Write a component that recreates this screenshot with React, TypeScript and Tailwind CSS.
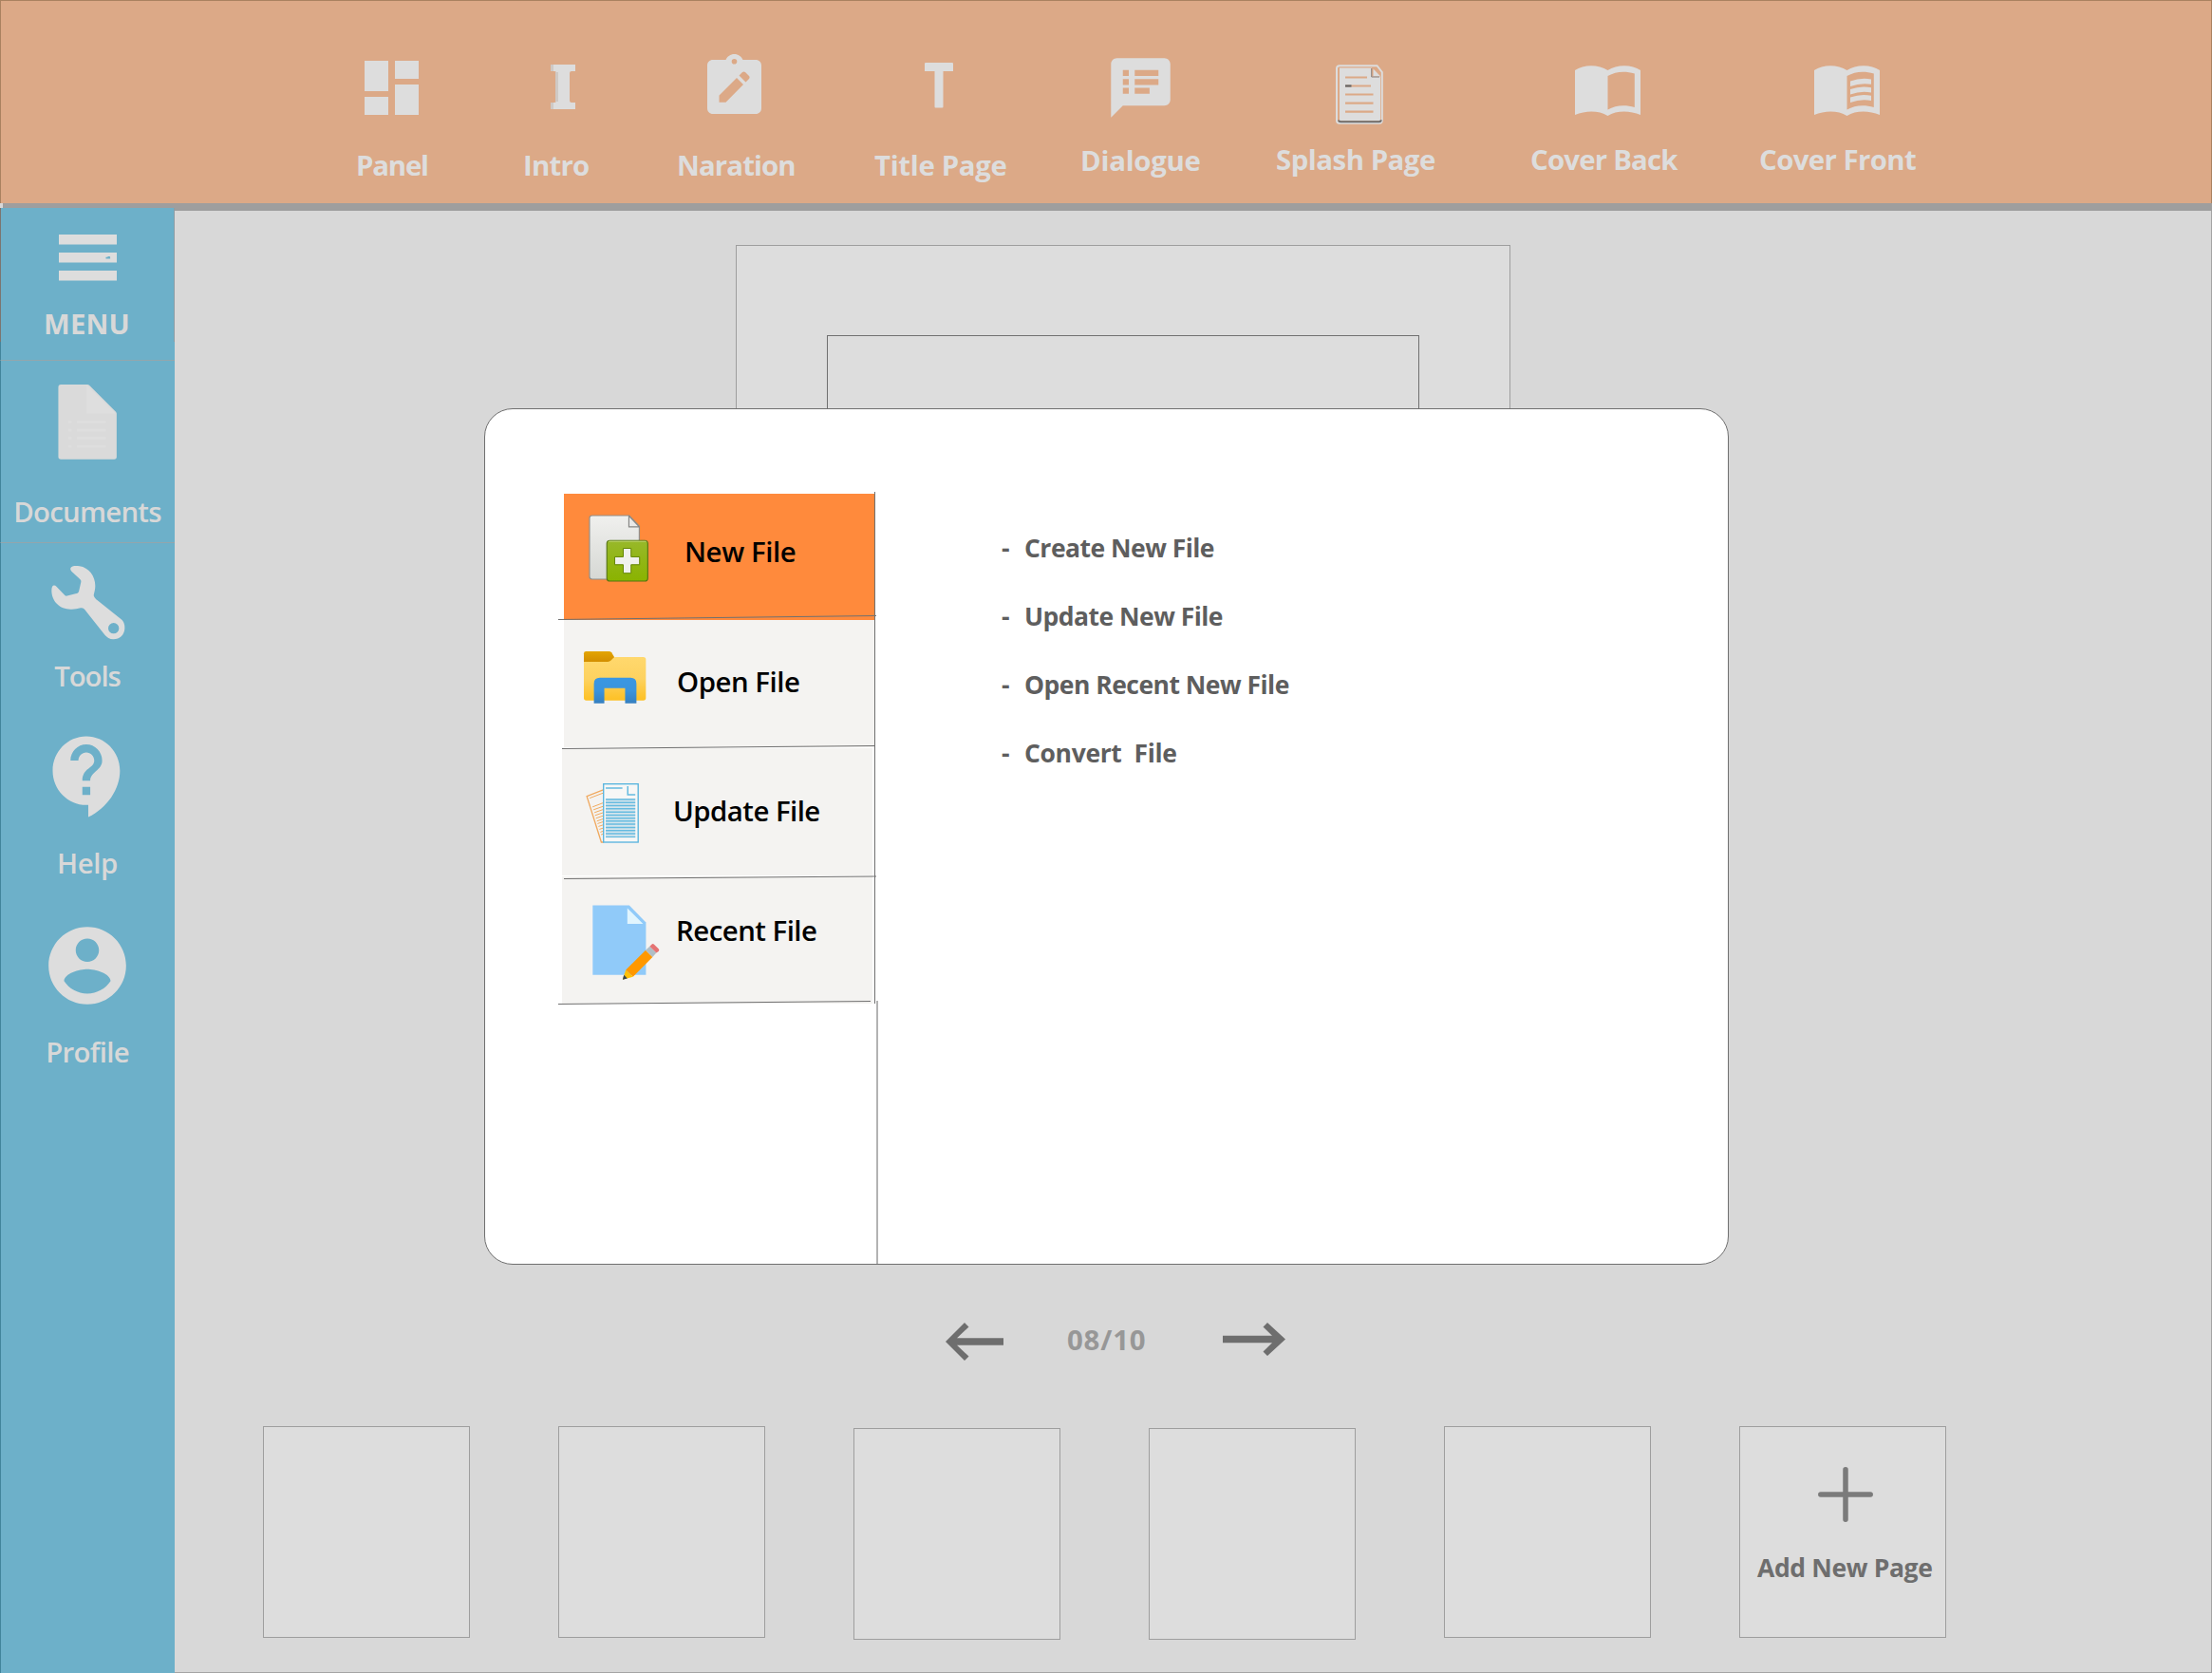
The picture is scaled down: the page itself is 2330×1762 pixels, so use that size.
import React from "react";
import { MdSpeakerNotes } from "react-icons/md";

function PanelIcon() {
  return (
    <svg className="h-[57px] w-[57px]" viewBox="0 0 57 57" fill="currentColor" shapeRendering="crispEdges">
      <path d="M0 0h25v32H0zM0 38h25v19H0zM32 0h25v19H32zM32 25h25v32H32z" />
    </svg>
  );
}

function IntroIcon() {
  return (
    <svg className="h-[47px] w-[26px]" viewBox="0 0 26 47" fill="currentColor">
      <path d="M0 0h26v7h-4q-2 0-2 2v29q0 2 2 2h4v7H0v-7h4q2 0 2-2V9q0-2-2-2H0z" />
      <path d="M0 0h3v7H0zM5 8h3v31H5zM0 40h3v7H0z" fill="#cfc9c5" />
    </svg>
  );
}

function NarrationIcon() {
  return (
    <svg className="h-[63px] w-[57px]" viewBox="0 0 57 63" fill="currentColor">
      <path
        fillRule="evenodd"
        d="M6 6h13.5C21 2.500 24.500 0 28.500 0S36 2.500 37.500 6H51c3.500 0 6 2.500 6 6v45c0 3.500-2.500 6-6 6H6c-3.500 0-6-2.500-6-6V12c0-3.500 2.500-6 6-6zM28.500 5a2.800 2.800 0 1 0 0 5.600a2.800 2.800 0 1 0 0-5.600zM12.500 43.500L31 25l7 7L19.500 50.700h-7zM33.500 22.500l3.500-3.500q1.500-1.200 3 0l4 4q1.200 1.500 0 3l-3.500 3.500z"
      />
    </svg>
  );
}

function TitleIcon() {
  return (
    <svg className="h-[48px] w-[30px]" viewBox="0 0 30 48" fill="currentColor">
      <path d="M1 0h28q1 0 1 1v8H19.500v37.500q0 1-1 1h-7q-1 0-1-1V9H0V1q0-1 1-1z" />
    </svg>
  );
}

function SplashIcon() {
  return (
    <svg className="h-[63px] w-[50px]" viewBox="0 0 50 63" fill="none">
      <path d="M4 1.200h39.500L48.800 8v50.500q0 3.300-3 3.300H4q-3 0-3-3V4q0-2.800 3-2.800z" fill="#dca987" stroke="#dddddd" strokeWidth="2" />
      <path d="M4 3.500h34v9h9V59H4z" fill="#dddddd" />
      <path d="M39.500 4.500l7.500 7.800h-7.500z" fill="#dddddd" />
      <path d="M37.700 4v9H46" stroke="#8a7f79" strokeWidth="1" />
      <path d="M3.200 58.500q0 1.800 2 1.800h40.500q2 0 2-2" stroke="#707070" strokeWidth="2" />
      <path d="M10 13.500h23M10 22.500h27M10 31.500h29.500M10 40.700h29.500M10 49.700h29.500" stroke="#dca987" strokeWidth="2.200" />
      <path d="M10 22.500h6.500" stroke="#666666" strokeWidth="2.200" />
    </svg>
  );
}

function BookIcon({ lines = false }: { lines?: boolean }) {
  return (
    <svg className="h-[53px] w-[69px]" viewBox="0 0 69 53" fill="currentColor">
      <path
        fillRule="evenodd"
        d="M0 5C9-1.500 25-1.500 34.500 5C44-1.500 60-1.500 69 5V52C58 47.500 44 47 34.500 53C25 47 11 47.500 0 52zM34.500 11V46.500C43 41.500 53 41 62.800 44V8.500C53 5.500 43 6 34.500 11z"
      />
      {lines && (
        <path
          d="M38 16.500Q49 12.500 60 14.500V19.800Q49 18 38 22zM38 25Q49 21 60 23.200V28.500Q49 26.500 38 30.500zM38 33.500Q49 29.500 60 31.700V37Q49 35 38 39z"
        />
      )}
    </svg>
  );
}

const tools = [
  { label: "Panel", box: "ml-[376px] w-[73px]", area: "h-[153px] pt-[63px] pl-[7px]", text: "-ml-[2px] tracking-[-1.2px]", icon: <PanelIcon /> },
  { label: "Intro", box: "ml-[103px] w-[67px]", area: "h-[153px] pt-[67px] pl-[27px]", text: "-ml-[2px] tracking-[-0.8px]", icon: <IntroIcon /> },
  { label: "Naration", box: "ml-[94px] w-[122px]", area: "h-[153px] pt-[56px] pl-[31px]", text: "-ml-[1px] tracking-[-0.9px]", icon: <NarrationIcon /> },
  { label: "Title Page", box: "ml-[85px] w-[139px]", area: "h-[153px] pt-[65px] pl-[53px]", text: "tracking-[-0.33px]", icon: <TitleIcon /> },
  { label: "Dialogue", box: "ml-[80px] w-[124px]", area: "h-[148px] pt-[54px] pl-[24px]", text: "-ml-[2px] tracking-[-0.28px]", icon: <MdSpeakerNotes className="h-[75px] w-[75px]" /> },
  { label: "Splash Page", box: "ml-[80px] w-[167px]", area: "h-[147px] pt-[67px] pl-[63px]", text: "tracking-[-0.49px]", icon: <SplashIcon /> },
  { label: "Cover Back", box: "ml-[101px] w-[155px]", area: "h-[147px] pt-[68px] pl-[47px]", text: "tracking-[-0.81px]", icon: <BookIcon /> },
  { label: "Cover Front", box: "ml-[87px] w-[164px]", area: "h-[147px] pt-[68px] pl-[57px]", text: "-ml-[1px] tracking-[-0.6px]", icon: <BookIcon lines /> },
];

function Toolbar() {
  return (
    <header className="flex h-[214px] shrink-0 border border-b-0 border-[#a9815f] bg-[#dca987] text-[#dddddd]">
      {tools.map((t) => (
        <div key={t.label} className={`shrink-0 ${t.box}`}>
          <div className={t.area}>{t.icon}</div>
          <div className={`text-[29.4px] leading-[40px] font-bold whitespace-nowrap ${t.text}`}>{t.label}</div>
        </div>
      ))}
    </header>
  );
}

function SideLabel({ children, className }: { children: string; className: string }) {
  return <div className={`pr-[1px] text-center text-[29.4px] leading-[40px] whitespace-nowrap text-[#d8d8d8] ${className}`}>{children}</div>;
}

function Sidebar() {
  return (
    <nav className="-mt-[3px] flex w-[184px] shrink-0 flex-col bg-[#6db0c9] text-[#dddddd]">
      <div className="h-[141px] border-r border-l border-r-[#8d9ea6] border-l-[#7b7570] pt-[28px]">
        <svg className="ml-[61px] h-[49px] w-[61px]" viewBox="0 0 61 49" fill="currentColor">
          <path d="M0 0h61v10.500H0zM0 19h61v10.500H0zM0 38h61v10.500H0z" />
          <path d="M49.500 23.800h1.500l1-.8h1.500l.6.800v1.700h-4.600z" fill="#6db0c9" />
        </svg>
        <SideLabel className="mt-[25px] font-bold tracking-[0.14px]">MENU</SideLabel>
      </div>
      <div className="h-[20px] border-b border-l border-b-[#93a6ad] border-l-[#41849b]" />
      <div className="h-[192px] border-b border-l border-b-[#93a6ad] border-l-[#41849b] pt-[24px]">
        <svg className="ml-[59px] h-[81px] w-[64px]" viewBox="180 612 192 244">
          <path d="M192 615h84q4 0 7 3l82 82q4 4 4 8v136q0 8-8 8H192q-8 0-8-8V623q0-8 8-8z" fill="#dadada" />
          <path d="M274 617l92 90h-92z" fill="#dedede" />
          <path d="M216 734h10M243 734h92M216 760h10M243 760h92M216 785h10M243 785h92M216 811h10M243 811h92" stroke="#dedede" strokeWidth="8" />
        </svg>
        <SideLabel className="mt-[34px] font-semibold tracking-[-0.75px]">Documents</SideLabel>
      </div>
      <div className="flex-1 border-l border-[#41849b] pt-[23px]">
        <svg className="ml-[52px] h-[80px] w-[80px]" viewBox="158 104 240 240" fill="currentColor">
          <path
            fillRule="evenodd"
            d="M222 114C225 106 240 107 250 108C280 112 300 140 300 170C300 182 297 190 295 200C297 208 302 212 306 215L382 276C392 284 394 297 393 306C391 326 378 339 357 339C345 339 337 332 331 326L272 252C266 243 262 239 254 240C244 242 236 244 226 244C190 246 162 220 162 185C162 168 170 165 178 173L204 200C207 203 210 202 214 201L238 195C245 193 248 191 249 184L255 158C256 153 254 151 251 148L225 124C222 121 221 118 222 114zM358 287a17 17 0 1 0 0 34a17 17 0 1 0 0-34z"
          />
        </svg>
        <SideLabel className="mt-[17px] font-semibold tracking-[-1.1px]">Tools</SideLabel>
        <svg className="mt-[35px] ml-[42px] h-[102px] w-[100px]" viewBox="0 0 24 24" preserveAspectRatio="none" fill="currentColor">
          <path d="M11.500 2C6.810 2 3 5.810 3 10.500S6.810 19 11.500 19h.5v3c4.860-2.340 8-7 8-11.500C20 5.810 16.190 2 11.500 2zm1 14.500h-2v-2h2v2zm0-3.500h-2c0-3.250 3-3 3-5 0-1.100-.9-2-2-2s-2 .9-2 2h-2c0-2.210 1.790-4 4-4s4 1.790 4 4c0 2.500-3 2.750-3 5z" />
        </svg>
        <SideLabel className="mt-[20px] font-semibold tracking-[-0.4px]">Help</SideLabel>
        <svg className="mt-[39px] ml-[42px] h-[98px] w-[98px]" viewBox="0 0 24 24" fill="currentColor">
          <path d="M12 2C6.480 2 2 6.480 2 12s4.480 10 10 10 10-4.480 10-10S17.520 2 12 2zm0 3c1.660 0 3 1.340 3 3s-1.340 3-3 3-3-1.340-3-3 1.340-3 3-3zm0 14.200c-2.500 0-4.710-1.280-6-3.220.03-1.990 4-3.080 6-3.080 1.990 0 5.970 1.090 6 3.080-1.290 1.940-3.500 3.220-6 3.220z" />
        </svg>
        <SideLabel className="mt-[22px] font-semibold tracking-[-0.7px]">Profile</SideLabel>
      </div>
    </nav>
  );
}

const thumbBox = "h-[223px] w-[218px] shrink-0 border border-[#9e9e9e] bg-[#dddddd]";

function Workspace() {
  return (
    <main className="flex flex-1 flex-col border-r border-b border-[#a3a3a3] bg-[#d8d8d8]">
      <div className="mt-[36px] ml-[591px] h-[1074px] w-[816px] border border-[#9e9e9e] bg-[#dddddd] pt-[94px] pl-[95px]">
        <div className="h-[900px] w-[624px] border border-[#707070]" />
      </div>
      <div className="flex h-[170px] items-start pt-[53px] pl-[812px] text-[#6e6e6e]">
        <svg className="mt-[8px] h-[40px] w-[61px]" viewBox="0 0 61 40" fill="currentColor">
          <path d="M0 20L20 0l4.500 4.500L12 16.200H61v7.600H12l12.500 11.700L20 40z" />
        </svg>
        <div className="mt-[6px] ml-[67px] w-[82px] text-[29.4px] leading-[40px] font-bold tracking-[0.8px] text-[#979797]">08/10</div>
        <svg className="mt-[8px] ml-[82px] h-[35px] w-[66px]" viewBox="0 0 66 35" fill="currentColor">
          <path d="M0 13.700H52L42.500 4.500 47 0 66 17.500 47 35l-4.500-4.500L52 21.300H0z" />
        </svg>
      </div>
      <div className="flex gap-[93px] pl-[93px]">
        <div className={thumbBox} />
        <div className={thumbBox} />
        <div className={`mt-[2px] ${thumbBox}`} />
        <div className={`mt-[2px] ${thumbBox}`} />
        <div className={thumbBox} />
        <button className={`${thumbBox} flex flex-col items-start`}>
          <svg className="mt-[42px] ml-[82px] h-[58px] w-[58px]" viewBox="0 0 58 58" fill="none" stroke="#7b7b7b" strokeWidth="5.500" strokeLinecap="round">
            <path d="M29 2.800v52.400M2.800 29h52.400" />
          </svg>
          <span className="mt-[30px] ml-[18px] text-[26.5px] leading-[36px] font-bold tracking-[-0.35px] whitespace-nowrap text-[#6e6e6e]">Add New Page</span>
        </button>
      </div>
    </main>
  );
}

function NewFileIcon() {
  return (
    <svg className="h-[71px] w-[63px]" viewBox="360 364 190 214">
      <defs>
        <linearGradient id="paper" x1="0" y1="0" x2="0" y2="1">
          <stop offset="0" stopColor="#f0f0ee" />
          <stop offset="1" stopColor="#d6d8d4" />
        </linearGradient>
        <linearGradient id="leaf" x1="0" y1="0" x2="0" y2="1">
          <stop offset="0" stopColor="#98b82a" />
          <stop offset="1" stopColor="#8ab300" />
        </linearGradient>
      </defs>
      <path d="M371 367h118l32 34v168H371q-8 0-8-8V375q0-8 8-8z" fill="url(#paper)" stroke="#908f8c" strokeWidth="3.500" />
      <path d="M488 368v35h33z" fill="#e9e9e8" stroke="#858583" strokeWidth="3.500" strokeLinejoin="round" />
      <rect x="418" y="446" width="130" height="129" rx="10" fill="url(#leaf)" stroke="#557412" strokeWidth="3.500" />
      <path d="M424 449h118" stroke="#bdd46f" strokeWidth="3" strokeLinecap="round" />
      <path d="M470 471h25v27h27v25h-27v27h-25v-27h-27v-25h27z" fill="#f0f1ee" stroke="#648600" strokeWidth="3" />
    </svg>
  );
}

function FolderIcon() {
  return (
    <svg className="h-[57px] w-[67px]" viewBox="340 796 202 170">
      <defs>
        <linearGradient id="folder" x1="0" y1="0" x2="0" y2="1">
          <stop offset="0" stopColor="#ffd86d" />
          <stop offset="0.500" stopColor="#fdd260" />
          <stop offset="1" stopColor="#fdc024" />
        </linearGradient>
        <linearGradient id="tab" x1="0" y1="0" x2="0" y2="1">
          <stop offset="0" stopColor="#e3a503" />
          <stop offset="1" stopColor="#d28d00" />
        </linearGradient>
        <linearGradient id="stand" x1="0" y1="0" x2="0" y2="1">
          <stop offset="0" stopColor="#3a97e2" />
          <stop offset="0.500" stopColor="#3a94dd" />
          <stop offset="1" stopColor="#357fc0" />
        </linearGradient>
      </defs>
      <path d="M350 798h72q6 0 9 4l9 15-12 16H343v-28q0-7 7-7z" fill="url(#tab)" />
      <path d="M343 831h76q6 0 10-4l7-7q4-4 9-4h87q8 0 8 8v122q0 8-8 8H351q-8 0-8-8z" fill="url(#folder)" />
      <path d="M375 963v-62q0-19 19-19h97q19 0 19 19v62h-36v-48h-66v48z" fill="url(#stand)" />
    </svg>
  );
}

function UpdateIcon() {
  return (
    <svg className="h-[65px] w-[58px]" viewBox="168 162 174 196" fill="none">
      <g stroke="#f0a95f">
        <path d="M226 186l-52 20 46 146h8" strokeWidth="4" />
        <path d="M183 212l42-16M192 240l34-13M195 249l31-11M198 258l28-10M200 267l26-9M203 276l23-8M206 285l20-7M208 293l18-6M211 302l15-5M214 311l12-4M217 320l9-3M219 328l7-2" strokeWidth="3" />
      </g>
      <rect x="227" y="167" width="110" height="185" fill="#f7f7f6" stroke="#56b3de" strokeWidth="4" />
      <rect x="234" y="213" width="94" height="125" fill="#d5e5ec" />
      <path
        d="M234 180h53M304 174v27h24M234 216h94M234 226h94M234 236h94M234 246h94M234 256h94M234 266h94M234 276h94M234 285h94M234 295h94M234 305h94M234 315h94M234 325h94M234 335h94"
        stroke="#66bbe0"
        strokeWidth="4.500"
      />
    </svg>
  );
}

function RecentIcon() {
  return (
    <svg className="h-[80px] w-[71px]" viewBox="192 548 214 240">
      <path d="M193 549h116l53 54v167H193z" fill="#90caf9" />
      <path d="M303 558l50 50h-50z" fill="#e1f5fe" />
      <path d="M298 754l63-63 22 22-62 63z" fill="#ff9800" />
      <path d="M361 691l13-12 21 21-12 13z" fill="#b0bec5" />
      <path d="M374 679l6-6q4-4 8 0l14 14q4 4 0 8l-7 5z" fill="#e57373" />
      <path d="M298 754l23 22-33 9z" fill="#ffc107" />
      <path d="M292 770l11 11-15 4z" fill="#37474f" />
    </svg>
  );
}

function MenuItem({ icon, label, box, iconBox, text }: { icon: React.ReactNode; label: string; box: string; iconBox: string; text: string }) {
  return (
    <button className={`flex w-[327px] items-start text-left ${box}`}>
      <span className={`shrink-0 ${iconBox}`}>{icon}</span>
      <span className={`text-[29.4px] leading-[40px] font-semibold whitespace-nowrap text-black ${text}`}>{label}</span>
    </button>
  );
}

const actions = ["Create New File", "Update New File", "Open Recent New File", "Convert  File"];

function FileDialog() {
  return (
    <section className="absolute top-[430px] left-[510px] flex h-[902px] w-[1311px] overflow-hidden rounded-[30px] border border-[#707070] bg-white">
      <div className="relative w-[415px] shrink-0 pt-[89px] pl-[81px]">
        <MenuItem
          icon={<NewFileIcon />}
          label="New File"
          box="ml-[2px] h-[133px] bg-[#ff8a3c]"
          iconBox="w-[127px] pt-[22px] pl-[26px]"
          text="mt-[41px] tracking-[-0.4px]"
        />
        <MenuItem
          icon={<FolderIcon />}
          label="Open File"
          box="ml-[2px] h-[134px] bg-[#f4f3f1]"
          iconBox="w-[119px] pt-[32px] pl-[20px]"
          text="mt-[45px] tracking-[-0.46px]"
        />
        <MenuItem
          icon={<UpdateIcon />}
          label="Update File"
          box="mt-px h-[134px] bg-[#f4f3f1]"
          iconBox="w-[117px] pt-[36px] pl-[24px]"
          text="mt-[46px] tracking-[-0.54px]"
        />
        <MenuItem
          icon={<RecentIcon />}
          label="Recent File"
          box="mt-px h-[134px] bg-[#f4f3f1]"
          iconBox="w-[120px] pt-[30px] pl-[32px]"
          text="mt-[37px] tracking-[-0.52px]"
        />
        <svg className="absolute top-[87px] left-[77px] h-[813px] w-[340px]" viewBox="0 0 340 813" fill="none" stroke="#707070" strokeWidth="1">
          <path d="M0 134.500L335 130.500M4 270.500L333 267.500M6 407.500L335 405M0 539.500L329 536.500M333.500 0V539" />
          <path d="M336 536V813" stroke="#b3b3b3" strokeWidth="2" />
        </svg>
      </div>
      <ul className="pt-[128px] pl-[129px] text-[26.5px] leading-[36px] font-bold text-[#5e5e5e]">
        {actions.map((a) => (
          <li key={a} className="mb-[36px] flex whitespace-pre">
            <span className="w-[24px]">-</span>
            <span className={a.startsWith("Convert") ? "tracking-[-0.35px]" : "tracking-[-0.52px]"}>{a}</span>
          </li>
        ))}
      </ul>
    </section>
  );
}

export default function App() {
  return (
    <div className="relative flex h-[1762px] w-[2330px] flex-col overflow-hidden bg-[#d8d8d8] font-['Open_Sans','Noto_Sans',sans-serif]">
      <Toolbar />
      <div className="ml-[3px] h-[8px] shrink-0 bg-[#9e9e9e]" />
      <div className="flex flex-1">
        <Sidebar />
        <Workspace />
      </div>
      <FileDialog />
    </div>
  );
}
